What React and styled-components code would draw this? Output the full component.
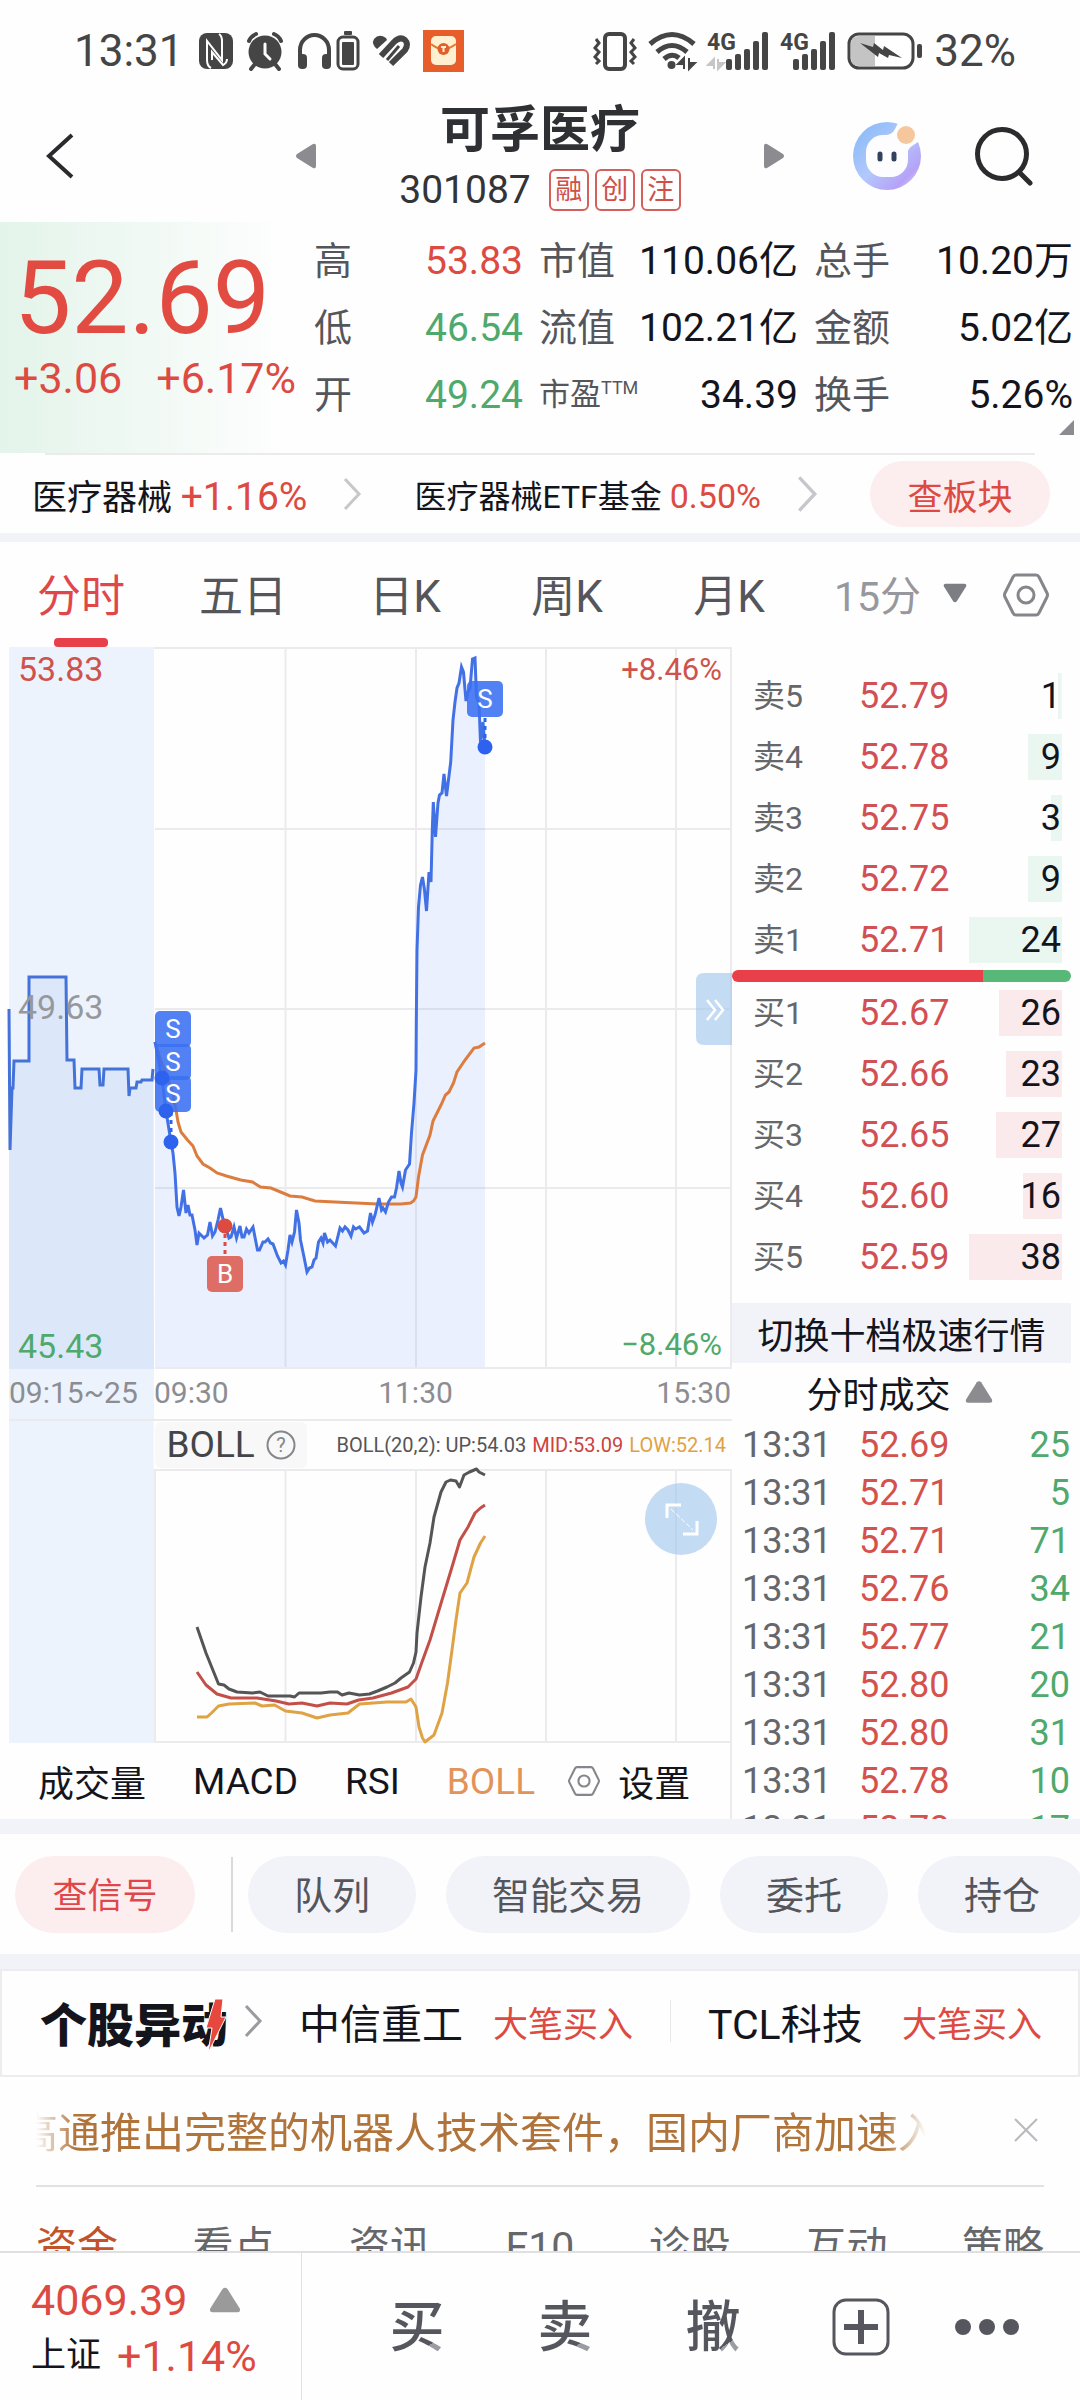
import styled, { createGlobalStyle } from "styled-components";

const RED = "#dd4a42";
const GREEN = "#4fa96c";

const GlobalStyle = createGlobalStyle`
  * {
    box-sizing: border-box;
  }

  body {
    margin: 0;
    background: #fefefe;
    color: #14151c;
    font-family: Roboto, "Noto Sans CJK SC", sans-serif;
    font-size: 36px;
  }

  button {
    border: 0;
    padding: 0;
    background: none;
    color: inherit;
    font: inherit;
    white-space: nowrap;
    cursor: pointer;
  }

  a {
    color: inherit;
    text-decoration: none;
    white-space: nowrap;
  }

  svg {
    display: block;
    flex: none;
    overflow: visible;
  }

  table {
    border-collapse: collapse;
    table-layout: fixed;
  }

  th,
  td {
    padding: 0;
    font-weight: 400;
    white-space: nowrap;
  }
`;

const QUOTES = [
  [
    { label: "高", value: "53.83", color: RED },
    { label: "市值", value: "110.06亿" },
    { label: "总手", value: "10.20万" },
  ],
  [
    { label: "低", value: "46.54", color: GREEN },
    { label: "流值", value: "102.21亿" },
    { label: "金额", value: "5.02亿" },
  ],
  [
    { label: "开", value: "49.24", color: GREEN },
    { label: "市盈", sup: "TTM", value: "34.39" },
    { label: "换手", value: "5.26%" },
  ],
];

const SELLS = [
  ["卖5", "52.79", 1, 4],
  ["卖4", "52.78", 9, 37],
  ["卖3", "52.75", 3, 12],
  ["卖2", "52.72", 9, 37],
  ["卖1", "52.71", 24, 100],
];

const BUYS = [
  ["买1", "52.67", 26, 68],
  ["买2", "52.66", 23, 60],
  ["买3", "52.65", 27, 71],
  ["买4", "52.60", 16, 42],
  ["买5", "52.59", 38, 100],
];

const TICKS = [
  ["52.69", 25],
  ["52.71", 5],
  ["52.71", 71],
  ["52.76", 34],
  ["52.77", 21],
  ["52.80", 20],
  ["52.80", 31],
  ["52.78", 10],
  ["52.78", 17],
];

const PRE_LINE =
  "9,1009 10,1150 12,1088 13,1088 14,1061 29,1061 29,977 66,977 67,1060 74,1060 75,1088 81,1088 82,1069 99,1069 100,1085 103,1085 104,1069 128,1069 129,1096 130,1088 136,1088 137,1082 141,1082 142,1080 152,1080 153,1069";

const PRICE_LINE =
  "155,1042 162,1078 166,1111 171,1142 173,1153 175,1173 177,1207 179,1216 181,1207 183.5,1190 186,1213 188,1205 190,1215 192,1215 195,1230 197,1245 199,1233 204,1238 207.5,1235 210,1222 212.5,1236 215,1232 218,1220 220.5,1208 223,1219 225,1225 229,1238 231,1237 234,1227 236.5,1238 240,1226 242,1237 244,1237 246.5,1229 249,1233 253,1227 257.5,1250 259.5,1250 263,1242 265,1242 268,1239 270.5,1243 273,1244 277.5,1256 281,1263 283.5,1261 285.5,1265 288,1250 290,1235 292,1242 294.5,1232 296.5,1210 299,1223 300.5,1240 304,1257 307,1272 309.5,1268 312,1267 314,1260 316,1258 318.5,1242 321,1238 323,1243 324.5,1233 327.5,1242 330,1240 335.5,1246 340,1228 342.5,1231 345,1227 348,1230 351,1236 353.5,1227 355.5,1229 359.5,1227 364,1233 367.5,1231 370.5,1213 372.5,1222 375,1215 379,1198 381.5,1210 383,1208 385.5,1212 388.5,1202 391.5,1197 394.5,1197 396.5,1188 399,1171 401,1183 402.5,1187 405.5,1170 409.5,1164 411.5,1133 414,1103 416,1070 416.3,1023 417,950 418.5,907 420.5,885 422.5,877 424.5,890 426.5,911 429,872 431,882 432.3,830 433.3,802 435.5,837 438,803 439.5,795 442,793 444,774 446.5,796 450.7,762 453,720 455,702 457,688 459,683 461.5,667 463.5,672 466,701 468,692 470,688 472.5,659 475,658 476.5,697 479,703 480.5,743 483,722 485,747";

const AVG_LINE =
  "155,1042 160.5,1060 167.5,1077 172.7,1093 176,1110 178,1122 181,1132 187.5,1140 193,1146 197,1156 203,1164 210,1168 217,1173 226.5,1176 240.7,1180 252.5,1182 260.5,1187 271,1188 283,1193 290,1196 302,1197 315,1201 335,1202 377.5,1204 401,1204 410.5,1203 413.5,1201 416,1197 418.5,1177 422.5,1155 430,1135 433,1121 441,1105 445.5,1095 449,1092 453.5,1083 457,1072 465,1060 474,1048 479,1047 485,1043";

const BOLL_UP =
  "197,1627 206,1653 218.5,1684 224,1685 229,1689 237,1692 252.5,1693 260,1692 268,1696 290,1696 294.5,1697 299,1693 321,1693 330,1692 337.5,1692 342,1695 349,1693 359.5,1695 369.5,1694 377.5,1691 387,1687 395,1683 401,1678 409.5,1672 413.5,1663 416,1652 417,1633 421,1597 425,1567 430,1543 434,1517 441,1492 446,1482 450.5,1480 456,1481 459.5,1487 464,1475 469.5,1472 476.5,1469 479,1472 485,1475";

const BOLL_MID =
  "197,1672 206,1685 217,1694 231,1698 257,1698 276,1701 289,1704 302,1703 317,1706 330,1703 347,1704 358.5,1700 373,1698 391.5,1693 408,1687 416,1679 422,1662 430,1640 442,1600 452,1567 460,1540 468,1527 475,1513 480.5,1508 485,1505";

const BOLL_LOW =
  "197,1717 207,1717 211.5,1713 218.5,1706 229,1704 255,1703 262,1706 274.5,1705 285.5,1711 302,1713 317,1718 330,1715 348,1713 359.5,1704 387,1702 406,1702 411,1699 416,1707 419,1727 422.5,1738 425,1742 434,1735 442,1713 447.5,1683 452,1650 456,1620 460,1593 467,1583 474,1557 480.5,1543 485,1536";

const NfcIcon = () => (
  <svg width="34" height="36" viewBox="0 0 34 36">
    <rect width="34" height="36" rx="8" fill="#454545" />
    <path d="M12 35q-4-2-4-8V8l15 19V8q0-5-3-7" fill="none" stroke="#fff" strokeWidth="2" />
    <path d="M13 27V19l11 13q4-2 4-6" fill="none" stroke="#fff" strokeWidth="2" />
  </svg>
);

const AlarmIcon = () => (
  <svg width="38" height="38" viewBox="0 0 38 38">
    <circle cx="19" cy="20" r="16.500" fill="#454545" />
    <path d="M9 32l-4 5M29 32l4 5" stroke="#454545" strokeWidth="4" strokeLinecap="round" />
    <path d="M3 9q2-5 7-7M35 9q-2-5-7-7" stroke="#454545" strokeWidth="4" fill="none" strokeLinecap="round" />
    <path d="M19 12v10l5 5" stroke="#fff" strokeWidth="3" fill="none" strokeLinecap="round" />
  </svg>
);

const HeadphoneIcon = () => (
  <svg width="62" height="40" viewBox="0 0 62 40">
    <path d="M3 28v-9a14.500 15 0 0129 0v9" fill="none" stroke="#454545" strokeWidth="4" />
    <rect x="1" y="23" width="9" height="15" rx="4" fill="#454545" />
    <rect x="25" y="23" width="9" height="15" rx="4" fill="#454545" />
    <rect x="47" y="0" width="8" height="4" rx="1" fill="#454545" />
    <rect x="41" y="6" width="20" height="32" rx="5" fill="none" stroke="#454545" strokeWidth="3" />
    <rect x="45" y="11" width="12" height="23" rx="1" fill="#454545" />
  </svg>
);

const HealthIcon = () => (
  <svg width="38" height="32" viewBox="0 0 38 32">
    <path d="M5 14Q-1 9 2 4q5-6 12-1l1 2z" fill="#454545" />
    <path d="M9 21L22 7q6-6 11-2 4 4 0 10L19 29" fill="none" stroke="#454545" strokeWidth="6" />
    <path d="M15 25L27 11" stroke="#454545" strokeWidth="3" />
  </svg>
);

const EnvelopeIcon = () => (
  <svg width="41" height="42" viewBox="0 0 41 42">
    <rect width="41" height="42" fill="#e85e2b" />
    <rect x="8" y="6" width="25" height="29" rx="5" fill="#fff0d2" />
    <path d="M8 14q12 10 25 0" fill="none" stroke="#e07a35" strokeWidth="2" />
    <circle cx="20.500" cy="19" r="6" fill="#e0602c" />
    <path d="M18 17h5M20.500 17v5" stroke="#fff0d2" strokeWidth="2" />
  </svg>
);

const VibrateIcon = () => (
  <svg width="44" height="38" viewBox="0 0 44 38" fill="none" stroke="#454545" strokeWidth="4">
    <rect x="12" y="2" width="20" height="35" rx="4" />
    <path d="M3 7l3 4-4 5 4 4-4 5 4 4-3 3M41 7l-3 4 4 5-4 4 4 5-4 4 3 3" strokeWidth="3" />
  </svg>
);

const WifiIcon = () => (
  <svg width="48" height="38" viewBox="0 0 48 38">
    <path d="M2 12q22-19 44 0M9 20q15-13 30 0M16 27q8-7 15-1" fill="none" stroke="#454545" strokeWidth="5" />
    <circle cx="23.500" cy="33" r="4" fill="#454545" />
    <path d="M36 37V26l-6 6h6M41 26v11l6-6h-6" fill="#454545" stroke="#454545" strokeWidth="2" />
  </svg>
);

const SignalIcon = ({ idle }) => (
  <svg width={idle ? 62 : 56} height="38" viewBox={idle ? "0 0 62 38" : "6 0 56 38"}>
    <text x={idle ? 0 : 6} y="18" fontSize="23" fontWeight="700" fill="#454545">4G</text>
    {idle && <path d="M7 37V27l-6 6h6M11 27v10l6-6h-6" fill="#c6c6c6" stroke="#c6c6c6" strokeWidth="2" />}
    <g fill="#454545">
      <rect x="19" y="27" width="6" height="11" rx="2" />
      <rect x="28" y="22" width="6" height="16" rx="2" />
      <rect x="37" y="17" width="6" height="21" rx="2" />
      <rect x="46" y="9" width="6" height="29" rx="2" />
      <rect x="55" y="0" width="6" height="38" rx="2" />
    </g>
  </svg>
);

const BatteryIcon = () => (
  <svg width="76" height="38" viewBox="0 0 76 38">
    <rect x="2" y="2" width="64" height="34" rx="10" fill="#fff" stroke="#454545" strokeWidth="3" />
    <path d="M12 4h16v30H12q-8 0-8-8V12q0-8 8-8z" fill="#c4c4c4" />
    <rect x="70" y="12" width="5" height="14" rx="2" fill="#454545" />
    <path d="M13 11l13 4 1-4 9 7 1-4 18 12-13-3-1 3-9-5-1 4z" fill="#454545" />
  </svg>
);

const RobotIcon = () => (
  <svg width="70" height="70" viewBox="0 0 70 70">
    <defs>
      <linearGradient id="bot" x1="0" y1="0" x2="1" y2="1">
        <stop offset="0.100" stopColor="#8cbcf8" />
        <stop offset="0.500" stopColor="#b3c8fc" />
        <stop offset="0.800" stopColor="#b5a2f7" />
        <stop offset="1" stopColor="#e6dcfd" />
      </linearGradient>
    </defs>
    <circle cx="35" cy="35" r="34" fill="url(#bot)" />
    <path d="M47 0l-4 8q-3 6-10 6l22 22q0-8 5-11l9-6V0z" fill="#fefefe" />
    <rect x="14" y="14" width="42" height="42" rx="17" fill="#fdfdff" />
    <circle cx="54" cy="14" r="9" fill="#f6c79c" />
    <path d="M28 33v5M42 33v5" stroke="#33415f" strokeWidth="5" strokeLinecap="round" />
  </svg>
);

const HexIcon = ({ size, color }) => (
  <svg width={size} height={size} viewBox="0 0 46 46" fill="none" stroke={color} strokeWidth="3">
    <path d="M13 3h20q2 0 3 2l8 16q1 2 0 4l-8 16q-1 2-3 2H13q-2 0-3-2L2 25q-1-2 0-4l8-16q1-2 3-2z" />
    <circle cx="23" cy="23" r="8" />
  </svg>
);

const Chevron = ({ width = 18, height = 32, color = "#c6c7ca" }) => (
  <svg width={width} height={height} viewBox="0 0 18 32" fill="none" stroke={color} strokeWidth="3">
    <path d="M2 1l14 15L2 31" />
  </svg>
);

const Triangle = ({ size, color = "#8b8b90", turn = 0 }) => (
  <svg width={size} height={size} viewBox="0 0 26 26">
    <path
      d="M11 4q2-2 4 0l10 16q1 3-2 3H3q-3 0-2-3z"
      fill={color}
      transform={`rotate(${turn} 13 13)`}
    />
  </svg>
);

const Flag = ({ x, y, kind }) => (
  <g>
    <rect x={x} y={y} width="36" height="36" rx="5" fill={kind === "S" ? "#3a70f3" : "#dc5a51"} fillOpacity="0.88" />
    <text x={x + 18} y={y + 27} fontSize="26" fill="#fff" textAnchor="middle">{kind}</text>
  </g>
);

const PriceChart = () => (
  <ChartSvg viewBox="0 647 732 722" role="img" aria-label="分时走势">
    <rect x="9" y="647" width="145" height="722" fill="#ecf3fd" />
    <polygon points={`9,1369 ${PRE_LINE} 154,1369`} fill="#dce8fa" />
    <path
      d="M154 648H732M155 829H731M155 1009H731M155 1188H731M155 1368H731M285.500 648V1368M416 648V1368M546 648V1368M676 648V1368M731 648V1369"
      stroke="#ebebed"
      strokeWidth="2"
      fill="none"
    />
    <polygon points={`155,1367 ${PRICE_LINE} 485,1367`} fill="#4678ff" fillOpacity="0.1" />
    <polyline points={PRE_LINE} fill="none" stroke="#4472d8" strokeWidth="3" />
    <polyline points={AVG_LINE} fill="none" stroke="#dc7d3f" strokeWidth="3" />
    <polyline points={PRICE_LINE} fill="none" stroke="#4271e6" strokeWidth="3" />
    <path d="M485 718V740M171 1112V1136" stroke="#2d62ee" strokeWidth="3" strokeDasharray="4 4" />
    <path d="M225 1234V1256" stroke="#dc4a40" strokeWidth="3" strokeDasharray="4 4" />
    <Flag x={467} y={681} kind="S" />
    <Flag x={155} y={1011} kind="S" />
    <Flag x={155} y={1044} kind="S" />
    <Flag x={155} y={1076} kind="S" />
    <Flag x={207} y={1256} kind="B" />
    <g fill="#2d62ee">
      <circle cx="485" cy="747" r="7.500" />
      <circle cx="162" cy="1078" r="7.500" />
      <circle cx="166" cy="1111" r="7.500" />
      <circle cx="171" cy="1142" r="7.500" />
    </g>
    <circle cx="225" cy="1226" r="7.500" fill="#dc4a40" />
    <g fontSize="34">
      <text x="18" y="681" fill="#cf534c">53.83</text>
      <text x="18" y="1019" fill="#97989c">49.63</text>
      <text x="18" y="1358" fill={GREEN}>45.43</text>
    </g>
    <g fontSize="31" textAnchor="end">
      <text x="722" y="680" fill="#cf534c">+8.46%</text>
      <text x="722" y="1355" fill={GREEN}>−8.46%</text>
    </g>
    <path d="M732 973H704q-8 0-8 8v56q0 8 8 8h28z" fill="#a5c8ee" fillOpacity="0.65" />
    <path d="M707 1000l8 10-8 10M715 1000l8 10-8 10" fill="none" stroke="#fff" strokeWidth="2.500" />
  </ChartSvg>
);

const BollChart = () => (
  <ChartSvg viewBox="0 1469 732 274" role="img" aria-label="BOLL">
    <rect x="9" y="1469" width="145" height="274" fill="#ecf3fd" />
    <path
      d="M155 1470H731V1742H155zM285.500 1470V1742M416 1470V1742M546 1470V1742M676 1470V1742"
      stroke="#ebebed"
      strokeWidth="2"
      fill="none"
    />
    <g fill="none" strokeWidth="3" strokeLinejoin="round">
      <polyline points={BOLL_LOW} stroke="#dfa245" />
      <polyline points={BOLL_MID} stroke="#c24f48" />
      <polyline points={BOLL_UP} stroke="#555557" />
    </g>
    <circle cx="681" cy="1519" r="36" fill="#a5c8ee" fillOpacity="0.65" />
    <g stroke="#fff" fill="none" strokeWidth="3">
      <path d="M667 1518V1505H681M697 1521V1534H683" />
      <path d="M671 1509L693 1530" strokeWidth="1" strokeDasharray="5 2" />
    </g>
  </ChartSvg>
);

const DepthRows = ({ rows, side }) => (
  <DepthTable>
    <tbody>
      {rows.map(([label, price, qty, share]) => (
        <tr key={label}>
          <DepthLabel scope="row">{label}</DepthLabel>
          <td>{price}</td>
          <QtyCell>
            <Qty $side={side} style={{ backgroundSize: `${share}% 100%` }}>{qty}</Qty>
          </QtyCell>
        </tr>
      ))}
    </tbody>
  </DepthTable>
);

export default function App() {
  return (
    <Page>
      <GlobalStyle />
      <StatusBar>
        <StatusGroup $gap={13}>
          <Clock>13:31</Clock>
          <NfcIcon />
          <AlarmIcon />
          <HeadphoneIcon />
          <HealthIcon />
          <EnvelopeIcon />
        </StatusGroup>
        <StatusGroup $gap={11}>
          <VibrateIcon />
          <WifiIcon />
          <SignalIcon idle />
          <SignalIcon />
          <BatteryIcon />
          <span>32%</span>
        </StatusGroup>
      </StatusBar>

      <Header>
        <button aria-label="返回">
          <svg width="28" height="46" viewBox="0 0 28 46" fill="none" stroke="#2b2b2d" strokeWidth="4">
            <path d="M26 2L3 23l23 21" />
          </svg>
        </button>
        <Switcher>
          <button aria-label="上一只"><Triangle size={26} turn={-90} /></button>
          <Stock>
            <StockName>可孚医疗</StockName>
            <StockCode>
              301087
              <Tags>
                <Tag>融</Tag>
                <Tag>创</Tag>
                <Tag>注</Tag>
              </Tags>
            </StockCode>
          </Stock>
          <button aria-label="下一只"><Triangle size={26} turn={90} /></button>
        </Switcher>
        <HeaderActions>
          <button aria-label="助手"><RobotIcon /></button>
          <button aria-label="搜索">
            <svg width="60" height="60" viewBox="0 0 60 60" fill="none" stroke="#2b2b2d" strokeWidth="5">
              <circle cx="28" cy="28" r="24.500" />
              <path d="M45 46l11 11" strokeLinecap="round" />
            </svg>
          </button>
        </HeaderActions>
      </Header>

      <Quote>
        <PriceBlock>
          <Price>52.69</Price>
          <Change>
            <span>+3.06</span>
            <span>+6.17%</span>
          </Change>
        </PriceBlock>
        <QuoteTable>
          <colgroup>
            <col width="70" />
            <col width="155" />
            <col width="110" />
            <col width="165" />
            <col width="110" />
            <col width="165" />
          </colgroup>
          <tbody>
            {QUOTES.map((row, i) => (
              <tr key={i}>
                {row.map((q) => [
                  <QuoteLabel key={q.label} scope="row" $small={q.sup}>
                    {q.label}
                    {q.sup && <Sup>{q.sup}</Sup>}
                  </QuoteLabel>,
                  <QuoteValue key={q.value} $color={q.color}>{q.value}</QuoteValue>,
                ])}
              </tr>
            ))}
          </tbody>
        </QuoteTable>
        <Corner />
      </Quote>

      <SectorRule />
      <Sectors>
        <SectorLink href="#sector" $size={35}>
          <span>医疗器械 <Up $size={39}>+1.16%</Up></span>
          <Chevron />
        </SectorLink>
        <SectorLink href="#etf" $size={32}>
          <span>医疗器械ETF基金 <Up $size={34}>0.50%</Up></span>
          <Chevron width={20} height={36} />
        </SectorLink>
        <SectorButton>查板块</SectorButton>
      </Sectors>
      <Band $height={9} />

      <PeriodTabs>
        <PeriodTab $active>分时</PeriodTab>
        <PeriodTab>五日</PeriodTab>
        <PeriodTab>日K</PeriodTab>
        <PeriodTab>周K</PeriodTab>
        <PeriodTab>月K</PeriodTab>
        <MinuteTab>
          15分 <Triangle size={24} turn={180} color="#7d7e84" />
        </MinuteTab>
        <ChartSetting aria-label="图表设置"><HexIcon size={46} color="#85868c" /></ChartSetting>
      </PeriodTabs>

      <Board>
        <ChartPane>
          <PriceChart />
          <TimeAxis>
            <PreTime>09:15~25</PreTime>
            <Times>
              <span>09:30</span>
              <span>11:30</span>
              <span>15:30</span>
            </Times>
          </TimeAxis>
          <BollHead>
            <BollName>
              BOLL
              <svg width="30" height="30" viewBox="0 0 30 30">
                <circle cx="15" cy="15" r="13.500" fill="none" stroke="#85868a" strokeWidth="2" />
                <text x="15" y="22" fontSize="20" textAnchor="middle" fill="#85868a">?</text>
              </svg>
            </BollName>
            <Legend>
              <span>BOLL(20,2): UP:54.03</span>
              <Figure $color="#cb433d">MID:53.09</Figure>
              <Figure $color="#dfa245">LOW:52.14</Figure>
            </Legend>
          </BollHead>
          <BollChart />
          <IndicatorTabs>
            <button>成交量</button>
            <IndicatorTab>MACD</IndicatorTab>
            <IndicatorTab>RSI</IndicatorTab>
            <IndicatorTab $active>BOLL</IndicatorTab>
            <SettingButton>
              <HexIcon size={32} color="#85868c" />
              设置
            </SettingButton>
          </IndicatorTabs>
        </ChartPane>

        <DepthPane>
          <DepthRows rows={SELLS} side="sell" />
          <Ratio />
          <DepthRows rows={BUYS} side="buy" />
          <DepthSwitch>切换十档极速行情</DepthSwitch>
          <TicksHead>
            分时成交 <Triangle size={28} />
          </TicksHead>
          <TickBox>
            <TickTable>
              <tbody>
                {TICKS.map(([price, qty], i) => (
                  <tr key={i}>
                    <TickTime>13:31</TickTime>
                    <TickPrice>{price}</TickPrice>
                    <TickQty>{qty}</TickQty>
                  </tr>
                ))}
              </tbody>
            </TickTable>
          </TickBox>
        </DepthPane>
      </Board>
      <Band $height={15} />

      <Chips>
        <SignalChip>查信号</SignalChip>
        <ChipRule />
        <Chip>队列</Chip>
        <Chip>智能交易</Chip>
        <Chip>委托</Chip>
        <Chip>持仓</Chip>
      </Chips>
      <Band $height={15} />

      <Movers>
        <MoversLink href="#movers">
          <MoversTitle>
            个股异动
            <Bolt width="20" height="54" viewBox="0 0 20 54">
              <path d="M9 0h8l-2 18h5L2 54l4-25H0z" fill="#e6483d" stroke="#fff" strokeWidth="1" />
            </Bolt>
          </MoversTitle>
          <Chevron color="#9a9ba0" />
        </MoversLink>
        <Mover href="#601608">
          中信重工 <Deal>大笔买入</Deal>
        </Mover>
        <MoverRule />
        <Mover href="#000100">
          TCL科技 <Deal>大笔买入</Deal>
        </Mover>
      </Movers>

      <News>
        <Ticker>
          <TickerText>高通推出完整的机器人技术套件，国内厂商加速入局</TickerText>
        </Ticker>
        <button aria-label="关闭">
          <svg width="24" height="24" viewBox="0 0 24 24" stroke="#b9babd" strokeWidth="2">
            <path d="M1 1l22 22M23 1L1 23" />
          </svg>
        </button>
      </News>

      <InfoTabs>
        <InfoTab href="#funds" $active>资金</InfoTab>
        <InfoTab href="#views">看点</InfoTab>
        <InfoTab href="#info">资讯</InfoTab>
        <InfoTab href="#f10">F10</InfoTab>
        <InfoTab href="#diagnose">诊股</InfoTab>
        <InfoTab href="#interact">互动</InfoTab>
        <InfoTab href="#strategy">策略</InfoTab>
      </InfoTabs>

      <BottomBar>
        <IndexCell>
          <IndexRow>
            4069.39 <Triangle size={32} color="#9a9a9a" />
          </IndexRow>
          <IndexRow $gap={16}>
            <IndexName>上证</IndexName>+1.14%
          </IndexRow>
        </IndexCell>
        <Actions>
          <TradeButton>买</TradeButton>
          <TradeButton>卖</TradeButton>
          <TradeButton>撤</TradeButton>
          <button aria-label="添加">
            <svg width="58" height="58" viewBox="0 0 58 58" fill="none" stroke="#55565e">
              <rect x="2" y="2" width="54" height="54" rx="12" strokeWidth="3" />
              <path d="M29 12v34M12 29h34" strokeWidth="6" />
            </svg>
          </button>
          <button aria-label="更多">
            <svg width="64" height="16" viewBox="0 0 64 16" fill="#55565e">
              <circle cx="8" cy="8" r="8" />
              <circle cx="32" cy="8" r="8" />
              <circle cx="56" cy="8" r="8" />
            </svg>
          </button>
        </Actions>
      </BottomBar>
    </Page>
  );
}

const Page = styled.main`
  min-height: 100vh;
  overflow: hidden;
`;

const StatusBar = styled.div`
  display: flex;
  align-items: center;
  justify-content: space-between;
  height: 96px;
  padding: 6px 64px 0 74px;
  color: #454545;
  font-size: 44px;
  line-height: 44px;
`;

const StatusGroup = styled.div`
  display: flex;
  align-items: center;
  gap: ${(p) => p.$gap}px;
`;

const Clock = styled.span`
  margin-right: 2px;
`;

const Header = styled.header`
  display: grid;
  grid-template-columns: 1fr auto 1fr;
  align-items: center;
  height: 126px;
  padding: 0 46px 6px;
`;

const Switcher = styled.div`
  display: flex;
  align-items: center;
  gap: 80px;
  text-align: center;
`;

const Stock = styled.div`
  padding-top: 4px;
`;

const StockName = styled.h1`
  margin: 0;
  color: #2f3033;
  font-size: 50px;
  font-weight: 700;
  line-height: 60px;
`;

const StockCode = styled.div`
  display: flex;
  align-items: center;
  gap: 18px;
  margin-top: 4px;
  color: #333438;
  font-size: 39px;
  line-height: 52px;
`;

const Tags = styled.span`
  display: flex;
  gap: 6px;
`;

const Tag = styled.span`
  width: 40px;
  height: 42px;
  border: 2px solid #d3605a;
  border-radius: 6px;
  color: #cf4f49;
  font-size: 27px;
  line-height: 38px;
`;

const HeaderActions = styled.div`
  display: flex;
  align-items: center;
  justify-content: flex-end;
  gap: 52px;
`;

const Quote = styled.section`
  position: relative;
  display: grid;
  grid-template-columns: 298px 1fr;
  height: 231px;
  padding-right: 7px;
  background: linear-gradient(90deg, #e3f4ea, #fefefe 290px);
`;

const PriceBlock = styled.div`
  padding: 20px 0 0 14px;
  color: ${RED};
`;

const Price = styled.div`
  color: #e24b42;
  font-size: 102px;
  line-height: 112px;
`;

const Change = styled.div`
  display: flex;
  gap: 34px;
  font-size: 43px;
  line-height: 48px;
`;

const QuoteTable = styled.table`
  width: 100%;
  height: 201px;
  margin-top: 5px;
  font-size: 39px;
  line-height: 60px;
`;

const QuoteLabel = styled.th`
  padding-left: 16px;
  color: #55565c;
  font-size: ${(p) => (p.$small ? 31 : 38)}px;
  text-align: left;
`;

const Sup = styled.sup`
  font-size: 18px;
  line-height: 18px;
`;

const QuoteValue = styled.td`
  color: ${(p) => p.$color || "#14151c"};
  text-align: right;
`;

const Corner = styled.span`
  position: absolute;
  right: 6px;
  bottom: 18px;
  border-bottom: 15px solid #8b8b90;
  border-left: 15px solid transparent;
`;

const SectorRule = styled.div`
  height: 2px;
  margin: 0 45px;
  background: #ebebec;
`;

const Sectors = styled.nav`
  display: flex;
  align-items: center;
  justify-content: space-between;
  height: 78px;
  padding: 0 30px 0 32px;
`;

const SectorLink = styled.a`
  display: flex;
  align-items: center;
  gap: 36px;
  font-size: ${(p) => p.$size}px;
`;

const Up = styled.span`
  color: ${RED};
  font-size: ${(p) => p.$size}px;
`;

const SectorButton = styled.button`
  width: 180px;
  height: 66px;
  border-radius: 33px;
  background: #fceeee;
  color: ${RED};
  font-size: 35px;
`;

const Band = styled.div`
  height: ${(p) => p.$height}px;
  background: #f2f3f8;
`;

const PeriodTabs = styled.nav`
  display: flex;
  align-items: center;
  height: 105px;
`;

const PeriodTab = styled.button`
  position: relative;
  width: 15%;
  height: 105px;
  padding-bottom: 4px;
  color: ${(p) => (p.$active ? "#e0474b" : "#55565c")};
  font-size: 44px;

  &::after {
    content: "";
    position: absolute;
    bottom: 0;
    left: 50%;
    display: ${(p) => (p.$active ? "block" : "none")};
    width: 54px;
    height: 9px;
    margin-left: -27px;
    border-radius: 4px;
    background: #e8404a;
  }
`;

const MinuteTab = styled.button`
  display: flex;
  align-items: center;
  gap: 22px;
  margin: 0 auto 0 24px;
  padding-bottom: 4px;
  color: #97989e;
  font-size: 41px;
`;

const ChartSetting = styled.button`
  margin-right: 31px;
`;

const Board = styled.section`
  display: grid;
  grid-template-columns: 732fr 348fr;
`;

const ChartPane = styled.div`
  min-width: 0;
`;

const ChartSvg = styled.svg`
  width: 100%;
  height: auto;
`;

const TimeAxis = styled.div`
  display: grid;
  grid-template-columns: 145fr 578fr;
  height: 50px;
  padding-left: 9px;
  color: #8c8d92;
  font-size: 30px;
  line-height: 48px;
`;

const PreTime = styled.span`
  background: #ecf3fd;
`;

const Times = styled.div`
  display: flex;
  justify-content: space-between;
  padding-right: 1px;

  span:nth-child(2) {
    margin-right: 54px;
  }
`;

const BollHead = styled.div`
  display: flex;
  align-items: center;
  justify-content: space-between;
  height: 50px;
  margin-left: 9px;
  padding: 0 6px 0 20%;
  border-top: 2px solid #ebebed;
  background: linear-gradient(#ecf3fd, #ecf3fd) no-repeat left / 20% 100%;
`;

const BollName = styled.button`
  display: flex;
  align-items: center;
  gap: 11px;
  height: 46px;
  padding: 0 11px;
  border-radius: 6px;
  background: #f8f8f9;
  color: #444548;
  font-size: 37px;
  line-height: 46px;
`;

const Legend = styled.div`
  display: flex;
  gap: 6px;
  color: #555557;
  font-size: 20px;
  white-space: nowrap;
`;

const Figure = styled.span`
  color: ${(p) => p.$color};
`;

const IndicatorTabs = styled.nav`
  display: flex;
  align-items: center;
  gap: 47px;
  height: 76px;
  padding-left: 38px;
  border-right: 2px solid #ebebed;
`;

const IndicatorTab = styled.button`
  color: ${(p) => (p.$active ? "#e3935a" : "inherit")};
  font-size: 37px;
`;

const SettingButton = styled.button`
  display: flex;
  align-items: center;
  gap: 18px;
  margin-left: -14px;
`;

const DepthPane = styled.div`
  min-width: 0;
  padding: 18px 9px 0 0;
`;

const DepthTable = styled.table`
  width: 100%;
  color: #d24f53;
  line-height: 46px;

  tr {
    height: 61px;
  }
`;

const DepthLabel = styled.th`
  width: 127px;
  padding-left: 21px;
  color: #66676b;
  font-size: 32px;
  text-align: left;
`;

const QtyCell = styled.td`
  width: 102px;
  padding-right: 9px;
`;

const Qty = styled.div`
  padding-right: 1px;
  background: no-repeat right
    linear-gradient(
      ${(p) => (p.$side === "sell" ? "#eaf7f1, #eaf7f1" : "#fbeaec, #fbeaec")}
    );
  color: #14151c;
  text-align: right;
`;

const Ratio = styled.div`
  height: 12px;
  border-radius: 6px;
  background: linear-gradient(90deg, #e93f48 74%, #58b878 74%);
`;

const DepthSwitch = styled.button`
  width: 100%;
  height: 60px;
  margin-top: 16px;
  background: #f2f3f8;
`;

const TicksHead = styled.h2`
  display: flex;
  align-items: center;
  justify-content: center;
  gap: 14px;
  height: 58px;
  margin: 0;
  padding-right: 4px;
  font-size: 36px;
  font-weight: 400;
`;

const TickBox = styled.div`
  height: 398px;
  overflow: hidden;
`;

const TickTable = styled.table`
  width: 100%;
  line-height: 48px;
`;

const TickTime = styled.td`
  width: 127px;
  padding-left: 10px;
  color: #66676b;
`;

const TickPrice = styled.td`
  color: #d4524b;
`;

const TickQty = styled.td`
  width: 100px;
  padding-right: 1px;
  color: ${GREEN};
  text-align: right;
`;

const Chips = styled.nav`
  display: flex;
  align-items: center;
  height: 120px;
  padding-left: 15px;
  overflow: hidden;
`;

const Chip = styled.button`
  flex: none;
  height: 77px;
  margin-right: 30px;
  padding: 0 46px 3px;
  border-radius: 39px;
  background: #f2f3f8;
  color: #55565c;
  font-size: 38px;
`;

const SignalChip = styled(Chip)`
  width: 180px;
  margin-right: 36px;
  padding: 0 0 3px;
  background: #fceeee;
  color: #e0474b;
  font-size: 35px;
`;

const ChipRule = styled.span`
  flex: none;
  width: 2px;
  height: 75px;
  margin-right: 15px;
  background: #d9dade;
`;

const Movers = styled.section`
  display: flex;
  align-items: center;
  gap: 37px;
  height: 108px;
  padding: 0 36px 4px 38px;
  border: 2px solid #ededee;
`;

const MoversLink = styled.a`
  display: flex;
  align-items: center;
  gap: 16px;
`;

const MoversTitle = styled.h2`
  position: relative;
  margin: 0;
  font-size: 47px;
  font-weight: 900;
`;

const Bolt = styled.svg`
  position: absolute;
  top: 12px;
  right: 2px;
`;

const Mover = styled.a`
  display: flex;
  flex: 1;
  align-items: center;
  justify-content: space-between;
  font-size: 41px;
`;

const Deal = styled.span`
  color: ${RED};
  font-size: 35px;
`;

const MoverRule = styled.span`
  width: 1px;
  height: 42px;
  background: #e6e6e8;
`;

const News = styled.section`
  display: flex;
  align-items: center;
  justify-content: space-between;
  height: 110px;
  margin: 0 36px;
  padding: 0 6px 3px 0;
  border-bottom: 2px solid #e2e2e3;
`;

const Ticker = styled.div`
  width: 890px;
  overflow: hidden;
  mask-image: linear-gradient(90deg, transparent, #000 40px, #000 850px, transparent);
`;

const TickerText = styled.p`
  margin: 0 0 0 -20px;
  color: #b0733a;
  font-size: 42px;
  white-space: nowrap;
`;

const InfoTabs = styled.nav`
  display: flex;
  justify-content: space-between;
  padding: 30px 36px 0;
  font-size: 41px;
  line-height: 60px;
`;

const InfoTab = styled.a`
  color: ${(p) => (p.$active ? "#c2522a" : "#66676b")};
`;

const BottomBar = styled.footer`
  position: fixed;
  right: 0;
  bottom: 0;
  left: 0;
  display: grid;
  grid-template-columns: 302px 1fr;
  height: 149px;
  border-top: 2px solid #e0e0e2;
  background: #fefefe;
`;

const IndexCell = styled.div`
  padding: 19px 0 0 31px;
  border-right: 1px solid #e0e0e2;
`;

const IndexRow = styled.div`
  display: flex;
  align-items: center;
  gap: ${(p) => p.$gap || 22}px;
  color: ${RED};
  font-size: 43px;
  line-height: 56px;
`;

const IndexName = styled.span`
  color: #14151c;
  font-size: 35px;
`;

const Actions = styled.div`
  display: grid;
  grid-template-columns: 148fr 148fr 148fr 148fr 104fr;
  place-items: center;
  padding: 0 41px;
`;

const TradeButton = styled.button`
  background: linear-gradient(145deg, #55565e 77%, #9b9ba2 77%);
  background-clip: text;
  color: transparent;
  font-size: 55px;
  font-weight: 500;
  line-height: 60px;
`;
